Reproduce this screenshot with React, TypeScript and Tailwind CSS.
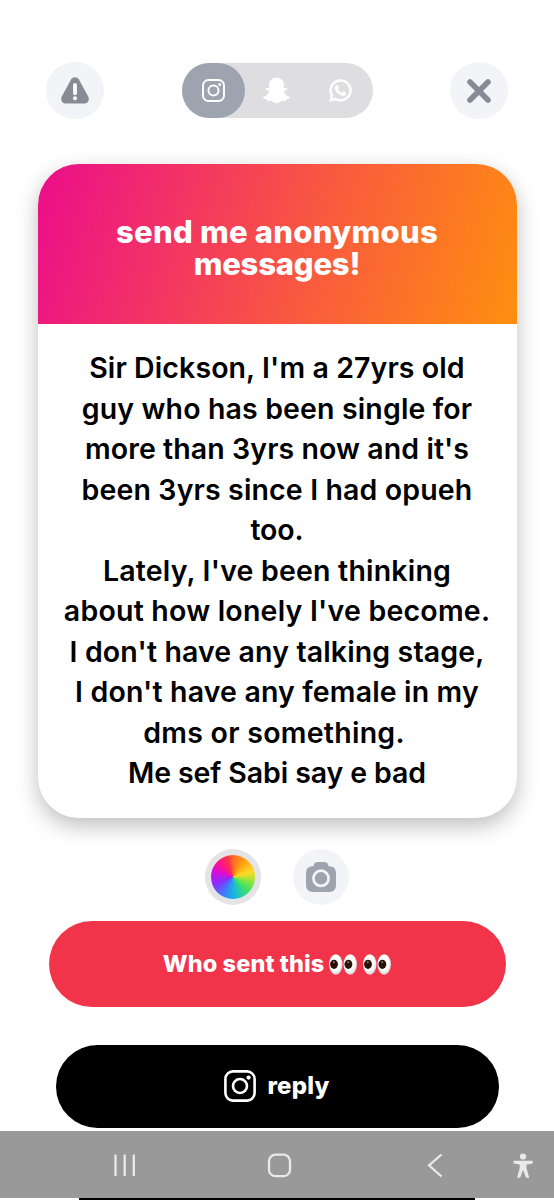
import React from 'react';
import { FaSnapchatGhost, FaWhatsapp } from 'react-icons/fa';

const messageLines = [
    { text: "Sir Dickson, I'm a 27yrs old", className: 'tracking-[0.1px]' },
    { text: 'guy who has been single for', className: 'tracking-[0.140px]' },
    { text: "more than 3yrs now and it's", className: 'tracking-[0.080px]' },
    { text: 'been 3yrs since I had opueh', className: 'tracking-[0.140px]' },
    { text: 'too.', className: 'tracking-[-0.1px]' },
    { text: "Lately, I've been thinking", className: 'tracking-[0.2px]' },
    { text: "about how lonely I've become.", className: 'tracking-[0.220px]' },
    { text: "I don't have any talking stage,", className: 'tracking-[0.130px]' },
    { text: "I don't have any female in my", className: 'tracking-[0.150px]' },
    { text: 'dms or something.', className: 'pr-1.5 tracking-[0.270px]' },
    { text: 'Me sef Sabi say e bad', className: 'tracking-[-0.1px]' },
];

const InstagramIcon = ({ className, stroke }: { className: string; stroke: number }) => (
    <svg viewBox="0 0 32 32" className={className} fill="none" stroke="currentColor" strokeWidth={stroke}>
        <rect x="1.4" y="1.4" width="29.2" height="29.2" rx="7.5" />
        <circle cx="16" cy="16" r="7" />
        <circle cx="24.6" cy="7.6" r="2.1" fill="currentColor" stroke="none" />
    </svg>
);

const WarningIcon = () => (
    <svg viewBox="0 0 28 27" className="h-[27px] w-7">
        <path
            d="M10.2 2.3C11.8-.5 16.2-.5 17.8 2.3L27.2 19.6C28.8 22.9 27 26.6 23.4 26.6H4.6C1 26.6-.8 22.9.8 19.6Z"
            fill="#868b94"
        />
        <path d="M14 8v8.3" stroke="white" strokeWidth="3.8" strokeLinecap="round" />
        <circle cx="14" cy="21.2" r="2" fill="white" />
    </svg>
);

const CameraIcon = () => (
    <svg viewBox="0 0 30 30" className="h-[30px] w-[30px]">
        <path
            d="M7.5 4.2Q7.8 0 12 0H18Q22.2 0 22.5 4.2H23.5Q30 4.5 30 11V23Q30 30 23 30H7Q0 30 0 23V11Q0 4.5 6.5 4.2Z"
            fill="#9da3af"
        />
        <circle cx="15" cy="16.3" r="7.6" fill="none" stroke="#f3f4f8" strokeWidth="2.7" />
    </svg>
);

const Eyes = () => (
    <svg viewBox="0 0 28 21" className="h-[21px] w-7" role="img" aria-label="eyes">
        <defs>
            <radialGradient id="eyeball" cx="0.45" cy="0.4" r="0.62">
                <stop offset="0.6" stopColor="#ffffff" />
                <stop offset="1" stopColor="#d4cfd2" />
            </radialGradient>
        </defs>
        <ellipse cx="6.8" cy="10.5" rx="6.7" ry="10.2" fill="url(#eyeball)" />
        <ellipse cx="21.2" cy="10.5" rx="6.7" ry="10.2" fill="url(#eyeball)" />
        <ellipse cx="5" cy="10.3" rx="3.9" ry="4.6" fill="#2a1108" />
        <ellipse cx="19.4" cy="10.3" rx="3.9" ry="4.6" fill="#2a1108" />
        <circle cx="4.8" cy="8.2" r="0.9" fill="#a78c80" />
        <circle cx="19.2" cy="8.2" r="0.9" fill="#a78c80" />
    </svg>
);

const NavBar = () => (
    <div className="h-[67px] w-full bg-[#999999] text-[#e9e9e9]">
        <svg viewBox="0 0 554 67" className="h-full w-full" fill="none" stroke="currentColor" strokeWidth="2.3">
            <path d="M115.5 23.5v21.5M124.7 23.5v21.5M133.8 23.5v21.5" />
            <rect x="269" y="23.7" width="21" height="21.5" rx="6.5" />
            <path d="M441.5 23.5L429 34.3L441.5 45.5" />
            <circle cx="523" cy="25.5" r="3.1" fill="currentColor" stroke="none" />
            <path
                d="M513.5 29.7H532.7V32.5L526.5 33.4V37L529.2 46.8H526L523 39L520.2 46.8H517L519.7 37V33.4L513.5 32.5Z"
                fill="currentColor"
                stroke="none"
            />
        </svg>
    </div>
);

const App: React.FC = () => {
    return (
        <div className="h-[1200px] w-[554px] overflow-hidden bg-white font-['Inter',sans-serif]">
            <div className="flex h-[1131px] w-full flex-col items-center">
                <div className="mt-[62px] flex h-[57px] w-full shrink-0 items-center justify-between px-[46px]">
                    <button className="flex h-[57px] w-[58px] items-center justify-center rounded-full bg-[#f3f4f8]">
                        <WarningIcon />
                    </button>
                    <div className="flex h-[55px] w-[191px] rounded-full bg-[#dedee0] text-white">
                        <div className="flex w-[63.500px] items-center justify-center rounded-full bg-[#9da3af]">
                            <InstagramIcon className="h-[23px] w-[23px]" stroke={2.7} />
                        </div>
                        <div className="flex w-[63.500px] items-center justify-center">
                            <FaSnapchatGhost className="h-[27px] w-[27px]" />
                        </div>
                        <div className="flex w-[64px] items-center justify-center">
                            <FaWhatsapp className="h-[25px] w-[25px]" stroke="currentColor" strokeWidth={14} />
                        </div>
                    </div>
                    <button className="flex h-[57px] w-[58px] items-center justify-center rounded-full bg-[#f3f4f8]">
                        <svg viewBox="0 0 24 24" className="h-6 w-6">
                            <path d="M3 3L21 21M21 3L3 21" stroke="#868b94" strokeWidth="5.6" strokeLinecap="round" />
                        </svg>
                    </button>
                </div>

                <div className="mt-[45px] h-[654px] w-[479px] shrink-0 overflow-hidden rounded-[41px] bg-white text-center shadow-[0_8px_22px_rgba(0,0,0,0.26)]">
                    <div className="flex h-40 items-center justify-center bg-[linear-gradient(106deg,#ec1187_3%,#f9593f_57%,#ff8e10_99%)] pt-2">
                        <p className="text-[31px] leading-8 font-extrabold tracking-[0.250px] whitespace-nowrap text-white">
                            send me anonymous<br />
                            <span className="tracking-[-0.2px]">messages!</span>
                        </p>
                    </div>
                    <div className="pt-6 text-[28.500px] leading-[40.550px] font-semibold whitespace-nowrap text-black">
                        {messageLines.map((line) => (
                            <div key={line.text} className={line.className}>{line.text}</div>
                        ))}
                    </div>
                </div>

                <div className="mt-[31px] flex shrink-0 gap-8">
                    <button className="flex h-14 w-14 items-center justify-center rounded-full bg-[#e4e4e6]">
                        <div className="h-11 w-11 rounded-full bg-[conic-gradient(#ff6a2a,#ff9a10_30deg,#fbdc24_75deg,#8de43c_105deg,#3be06a_135deg,#18b9dc_175deg,#3d7cfa_210deg,#8c2bfb_250deg,#d40fdc_285deg,#fb1390_315deg,#ff3545_345deg,#ff6a2a)]" />
                    </button>
                    <button className="flex h-14 w-14 items-center justify-center rounded-full bg-[#f3f4f8]">
                        <CameraIcon />
                    </button>
                </div>

                <button className="mt-4 flex h-[86px] w-[457px] shrink-0 items-center justify-center rounded-full bg-[#f1344a] text-white">
                    <span className="text-[23.500px] font-extrabold tracking-[0.1px] whitespace-nowrap">Who sent this</span>
                    <span className="ml-[5px] flex gap-1.5">
                        <Eyes />
                        <Eyes />
                    </span>
                </button>

                <button className="mt-[38px] flex h-[82.500px] w-[443px] shrink-0 items-center justify-center gap-[11px] rounded-full bg-black text-white">
                    <InstagramIcon className="h-8 w-8" stroke={2.6} />
                    <span className="text-2xl font-extrabold tracking-[0.2px]">reply</span>
                </button>
            </div>

            <NavBar />
            <div className="mx-auto h-0.5 w-[396px] bg-black" />
        </div>
    );
};

export default App;
